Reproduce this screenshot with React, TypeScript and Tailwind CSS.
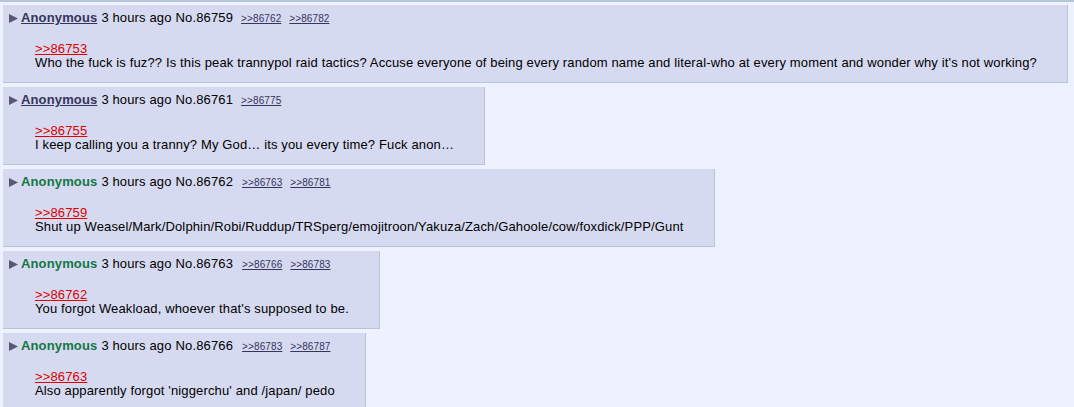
type Post = {
  no: number;
  mail: boolean;
  backlinks: number[];
  quote: number;
  text: string;
};

const posts: Post[] = [
  {
    no: 86759,
    mail: true,
    backlinks: [86762, 86782],
    quote: 86753,
    text: "Who the fuck is fuz?? Is this peak trannypol raid tactics? Accuse everyone of being every random name and literal-who at every moment and wonder why it's not working?",
  },
  {
    no: 86761,
    mail: true,
    backlinks: [86775],
    quote: 86755,
    text: "I keep calling you a tranny? My God… its you every time? Fuck anon…",
  },
  {
    no: 86762,
    mail: false,
    backlinks: [86763, 86781],
    quote: 86759,
    text: "Shut up Weasel/Mark/Dolphin/Robi/Ruddup/TRSperg/emojitroon/Yakuza/Zach/Gahoole/cow/foxdick/PPP/Gunt",
  },
  {
    no: 86763,
    mail: false,
    backlinks: [86766, 86783],
    quote: 86762,
    text: "You forgot Weakload, whoever that's supposed to be.",
  },
  {
    no: 86766,
    mail: false,
    backlinks: [86783, 86787],
    quote: 86763,
    text: "Also apparently forgot 'niggerchu' and /japan/ pedo",
  },
];

const Reply = ({ post }: { post: Post }) => {
  return (
    <div className="w-fit bg-[#d6daf0] border-r border-b border-[#b7c5d9] ml-[3px] mb-[4px] px-[2px] pt-[5px] pb-[2px]">
      <div className="flex items-baseline leading-[15px] pl-[4px] pr-[28px] whitespace-nowrap">
        <svg width="9" height="9" viewBox="0 0 9 9" className="self-center mr-[3px] mt-[1px] shrink-0">
          <polygon points="0,0 9,4.5 0,9" fill="#585876" />
        </svg>
        {post.mail ? (
          <a href="#" className="font-bold text-[#34345c] underline">
            Anonymous
          </a>
        ) : (
          <span className="font-bold text-[#117743]">Anonymous</span>
        )}
        <span className="ml-[4px]">3 hours ago</span>
        <span className="ml-[4px]">No.{post.no}</span>
        {post.backlinks.map((b) => (
          <a
            key={b}
            href="#"
            className="ml-[8px] text-[10px] tracking-[0.1px] text-[#34345c] underline first-of-type:ml-[9px]"
          >
            &gt;&gt;{b}
          </a>
        ))}
      </div>
      <div className="mt-[16px] mb-[10px] ml-[30px] mr-[28px] leading-[14px] whitespace-nowrap">
        <a href="#" className="text-[#dd0000] underline">
          &gt;&gt;{post.quote}
        </a>
        <br />
        {post.text}
      </div>
    </div>
  );
};

export default function App() {
  return (
    <div className="min-h-screen bg-[#eef2ff] text-black text-[13px] tracking-[0.14px] font-['Liberation_Sans',Arial,sans-serif]">
      <div className="h-[2px] bg-[#b7c5d9] mb-[3px]" />
      {posts.map((p) => (
        <Reply key={p.no} post={p} />
      ))}
    </div>
  );
}
